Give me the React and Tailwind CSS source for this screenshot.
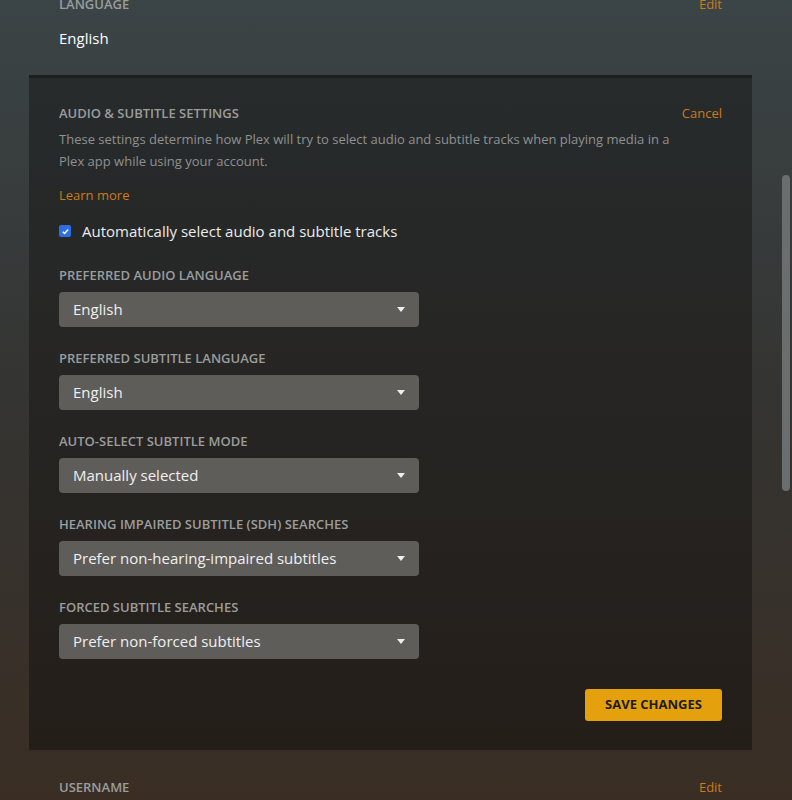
export default function App() {
  const groups = [
    ["PREFERRED AUDIO LANGUAGE", "English"],
    ["PREFERRED SUBTITLE LANGUAGE", "English"],
    ["AUTO-SELECT SUBTITLE MODE", "Manually selected"],
    ["HEARING IMPAIRED SUBTITLE (SDH) SEARCHES", "Prefer non-hearing-impaired subtitles"],
    ["FORCED SUBTITLE SEARCHES", "Prefer non-forced subtitles"],
  ];
  return (
    <div className="relative w-[792px] h-[800px] overflow-hidden bg-gradient-to-b from-[#3b4446] via-[#343432] to-[#3a2e24]" style={{ fontFamily: '"Open Sans", sans-serif' }}>
      <div className="absolute right-[2px] top-[175px] w-[8px] h-[316px] rounded-full bg-[#6a6e6e]" />
      <div className="px-[59px] pr-[70px] h-[75px] pt-[1px]">
        <div className="flex justify-between text-[13px] font-semibold leading-[20px] -mt-[7px]">
          <span className="text-[#9a9d9d]">LANGUAGE</span>
          <span className="text-[#cc7b19] font-normal">Edit</span>
        </div>
        <div className="text-white text-[15px] mt-[13px]">English</div>
      </div>
      <div className="mx-[29px] w-[723px] h-[675px] bg-gradient-to-b from-[#272b2c] to-[#241e19] border-t-[3px] border-[#1d2021] px-[30px] pt-[25px]">
        <div className="flex justify-between text-[13px] leading-[20px]">
          <span className="text-[#9a9d9d] font-semibold">AUDIO &amp; SUBTITLE SETTINGS</span>
          <span className="text-[#cc7b19]">Cancel</span>
        </div>
        <p className="text-[#8f9191] text-[13px] leading-[22px] mt-[5px] w-[612px]">
          These settings determine how Plex will try to select audio and subtitle tracks when playing media in a Plex app while using your account.
        </p>
        <div className="text-[#cc7b19] text-[13px] mt-[13px] leading-[20px]">Learn more</div>
        <div className="flex items-center gap-[11px] mt-[16px]">
          <div className="w-[12px] h-[12px] rounded-[2px] bg-[#2d6fe0] flex items-center justify-center">
            <svg width="9" height="9" viewBox="0 0 10 10"><path d="M2 5.2l2 2 4-4.5" stroke="white" strokeWidth="1.6" fill="none" /></svg>
          </div>
          <span className="text-[#ececec] text-[15px] leading-[20px]">Automatically select audio and subtitle tracks</span>
        </div>
        <div className="mt-[24px] flex flex-col gap-[21px]">
          {groups.map(([l, v]) => (
            <div key={l}>
              <div className="text-[#9a9d9d] text-[13px] font-semibold leading-[20px]">{l}</div>
              <div className="mt-[7px] w-[360px] h-[35px] rounded-[4px] bg-[#5f5d5a] flex items-center justify-between px-[14px]">
                <span className="text-[#f0f0f0] text-[15px]">{v}</span>
                <svg width="8" height="6" viewBox="0 0 8 6"><path d="M0 0h8L4 5z" fill="#eee" /></svg>
              </div>
            </div>
          ))}
        </div>
        <div className="flex justify-end mt-[30px]">
          <div className="w-[137px] h-[32px] rounded-[3px] bg-[#e5a00d] flex items-center justify-center text-[#1c1c1c] text-[13px] font-bold">SAVE CHANGES</div>
        </div>
      </div>
      <div className="px-[59px] pr-[70px] mt-[27px] flex justify-between text-[13px] leading-[20px]">
        <span className="text-[#9a9d9d] font-semibold">USERNAME</span>
        <span className="text-[#cc7b19]">Edit</span>
      </div>
    </div>
  );
}
